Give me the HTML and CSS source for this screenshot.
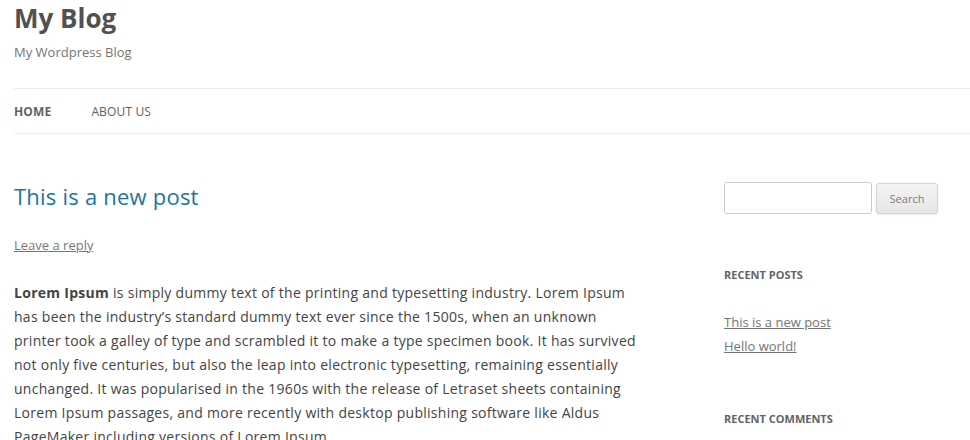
FILE: index.html
```html
<!DOCTYPE html>
<html lang="en">
<head>
<meta charset="utf-8">
<title>My Blog</title>
<link rel="stylesheet" href="styles.css">
</head>
<body>
<div class="site">
  <header class="site-header">
    <h1 class="site-title">My Blog</h1>
    <h2 class="site-description">My Wordpress Blog</h2>
    <nav class="main-nav">
      <ul class="menu">
        <li class="current"><a href="#">Home</a></li>
        <li><a href="#">About Us</a></li>
      </ul>
    </nav>
  </header>
  <div class="main">
    <div class="content">
      <article class="post">
        <header class="entry-header">
          <h1 class="entry-title"><a href="#">This is a new post</a></h1>
          <div class="comments-link"><a href="#">Leave a reply</a></div>
        </header>
        <div class="entry-content">
          <p><strong>Lorem Ipsum</strong> is simply dummy text of the printing and typesetting industry. Lorem Ipsum has been the industry’s standard dummy text ever since the 1500s, when an unknown printer took a galley of type and scrambled it to make a type specimen book. It has survived not only five centuries, but also the leap into electronic typesetting, remaining essentially unchanged. It was popularised in the 1960s with the release of Letraset sheets containing Lorem Ipsum passages, and more recently with desktop publishing software like Aldus PageMaker including versions of Lorem Ipsum.</p>
        </div>
      </article>
    </div>
    <aside class="sidebar">
      <section class="widget">
        <form class="search-form">
          <input class="search-input" type="text" aria-label="Search">
          <button class="search-button" type="button">Search</button>
        </form>
      </section>
      <section class="widget">
        <h3 class="widget-title">Recent Posts</h3>
        <ul class="widget-list">
          <li><a href="#">This is a new post</a></li>
          <li><a href="#">Hello world!</a></li>
        </ul>
      </section>
      <section class="widget">
        <h3 class="widget-title">Recent Comments</h3>
      </section>
    </aside>
  </div>
</div>
</body>
</html>
```

FILE: styles.css
```css
html, body {
  margin: 0;
  padding: 0;
  background: #fff;
  overflow: hidden;
}

body {
  font-family: "Open Sans", "Liberation Sans", sans-serif;
  color: #444;
  font-size: 14px;
  line-height: 24px;
}

.site {
  width: 960px;
  padding-left: 14px;
}

.site-title {
  margin: 0;
  font-size: 26px;
  line-height: 36px;
  font-weight: 700;
  color: #515151;
}

.site-description {
  margin: 4px 0 0;
  font-size: 13px;
  line-height: 24px;
  font-weight: 400;
  color: #757575;
}

.main-nav {
  margin-top: 24px;
  border-top: 1px solid #ededed;
  border-bottom: 1px solid #ededed;
  width: 980px;
}

.menu {
  list-style: none;
  margin: 0;
  padding: 1px 0 0;
  display: flex;
  gap: 40px;
}

.menu a {
  display: block;
  font-size: 12px;
  line-height: 43px;
  letter-spacing: 0.15px;
  text-transform: uppercase;
  text-decoration: none;
  color: #5e5e5e;
}

.menu .current a {
  font-weight: 700;
  color: #636363;
}

.main {
  display: flex;
}

.content {
  width: 625px;
  padding-top: 50px;
}

.entry-header {
  margin-bottom: 24px;
}

.entry-title {
  margin: 0;
  font-size: 22px;
  line-height: 24px;
  font-weight: 400;
  letter-spacing: 0.22px;
}

.entry-title a {
  color: #21759b;
  text-decoration: none;
}

.comments-link {
  margin-top: 25px;
  font-size: 13px;
  line-height: 24px;
}

.comments-link a {
  color: #777;
  text-decoration: underline;
}

.entry-content p {
  margin: 0;
  letter-spacing: 0.28px;
}

.entry-content strong {
  font-weight: 700;
}

.sidebar {
  width: 250px;
  margin-left: auto;
  padding-top: 48px;
}

.widget {
  margin-bottom: 48px;
}

.search-form {
  display: flex;
  align-items: flex-start;
  gap: 4px;
}

.search-input {
  box-sizing: border-box;
  width: 148px;
  height: 32px;
  margin: 0;
  border: 1px solid #ccc;
  border-radius: 3px;
  background: #fff;
  font-family: inherit;
}

.search-button {
  box-sizing: border-box;
  width: 62px;
  height: 31px;
  margin: 1px 0 0;
  padding: 0;
  border: 1px solid #d2d2d2;
  border-radius: 3px;
  background: linear-gradient(to bottom, #f4f4f4, #e6e6e6);
  box-shadow: 0 1px 2px rgba(64, 64, 64, 0.1);
  font-family: inherit;
  font-size: 11px;
  line-height: 1;
  color: #7c7c7c;
}

.widget-title {
  margin: 0 0 23px;
  padding-top: 1px;
  font-size: 11px;
  line-height: 24px;
  font-weight: 700;
  text-transform: uppercase;
  color: #636363;
}

.widget-list {
  list-style: none;
  margin: 0;
  padding: 0;
}

.widget-list li {
  font-size: 13px;
  line-height: 24px;
}

.widget-list a {
  color: #757575;
  text-decoration: underline;
}
```
